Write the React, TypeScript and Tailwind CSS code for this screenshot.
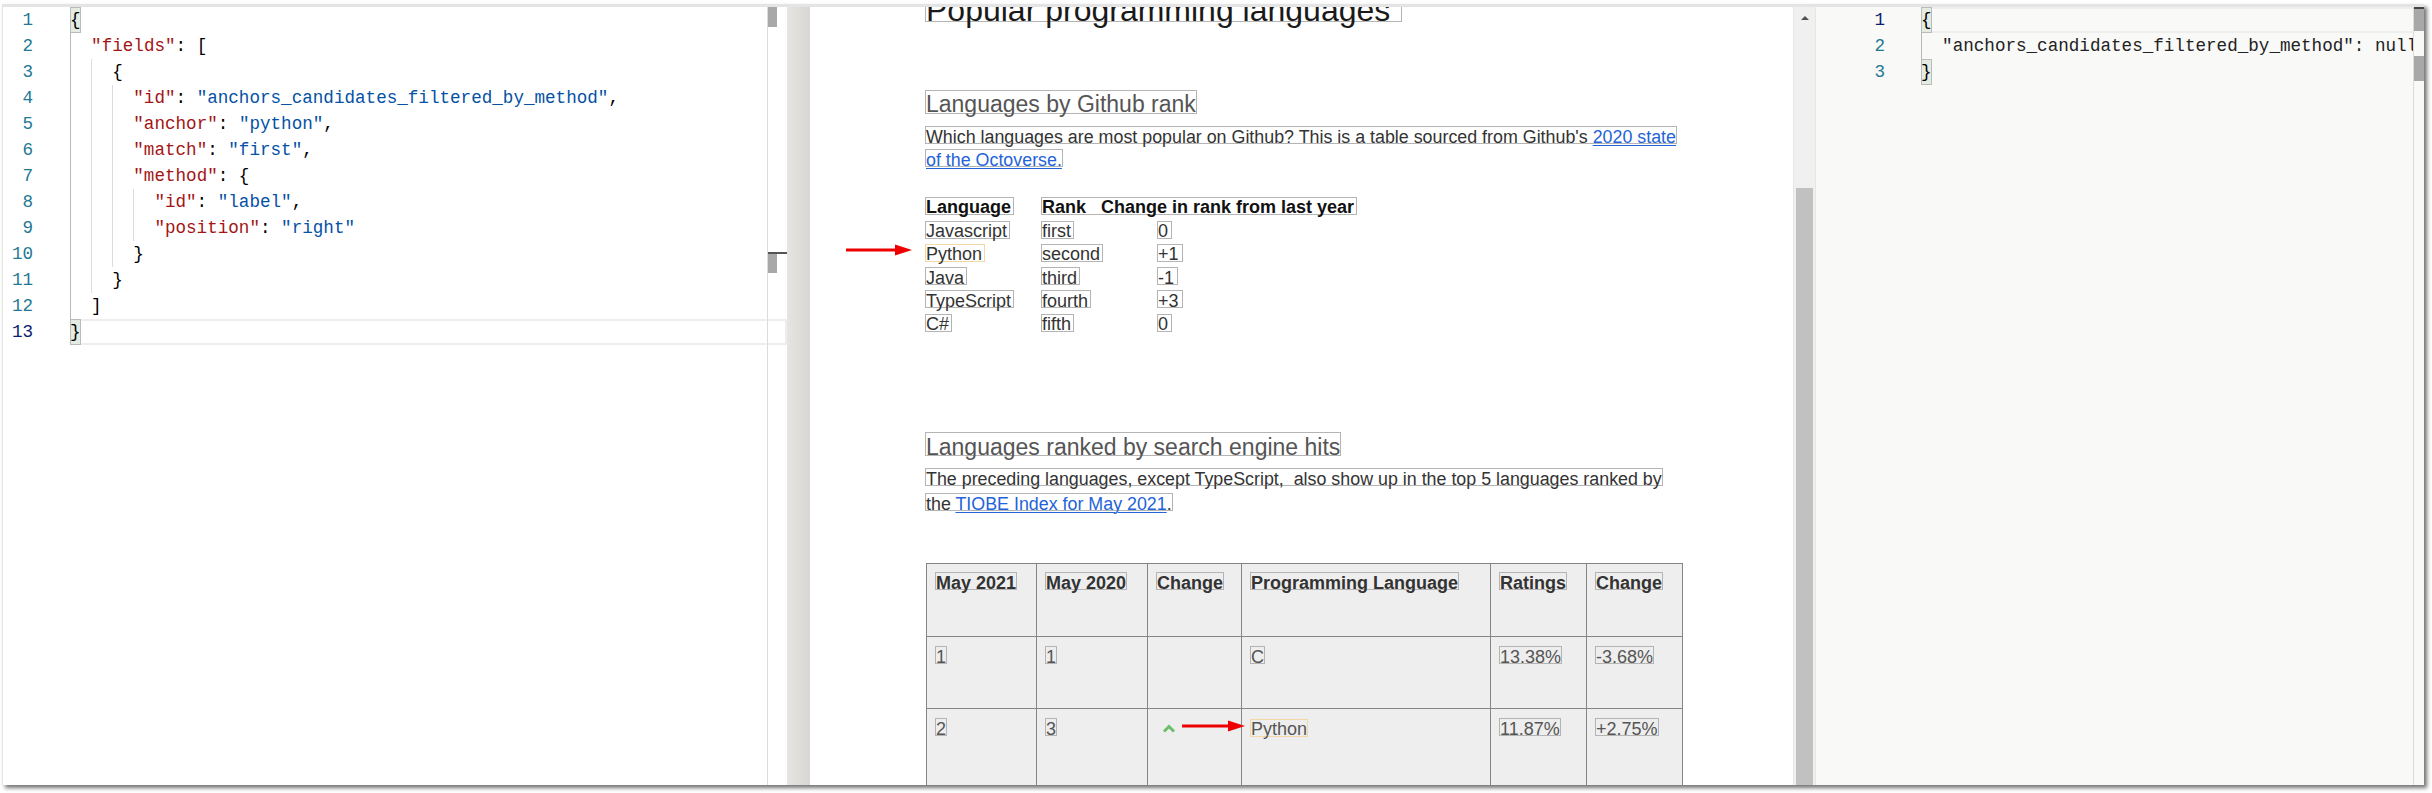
import React from "react";

type Tok = [string, string];

const KEY = "text-[#a31515]";
const STR = "text-[#0451a5]";
const PUN = "text-[#000000]";

type Line = { indent: number; toks: Tok[]; brace?: string };

const leftCode: Line[] = [
  { indent: 0, toks: [], brace: "{" },
  { indent: 1, toks: [['"fields"', KEY], [": [", PUN]] },
  { indent: 2, toks: [["{", PUN]] },
  {
    indent: 3,
    toks: [
      ['"id"', KEY],
      [": ", PUN],
      ['"anchors_candidates_filtered_by_method"', STR],
      [",", PUN],
    ],
  },
  { indent: 3, toks: [['"anchor"', KEY], [": ", PUN], ['"python"', STR], [",", PUN]] },
  { indent: 3, toks: [['"match"', KEY], [": ", PUN], ['"first"', STR], [",", PUN]] },
  { indent: 3, toks: [['"method"', KEY], [": {", PUN]] },
  { indent: 4, toks: [['"id"', KEY], [": ", PUN], ['"label"', STR], [",", PUN]] },
  { indent: 4, toks: [['"position"', KEY], [": ", PUN], ['"right"', STR]] },
  { indent: 3, toks: [["}", PUN]] },
  { indent: 2, toks: [["}", PUN]] },
  { indent: 1, toks: [["]", PUN]] },
  { indent: 0, toks: [], brace: "}" },
];

const rightCode: Line[] = [
  { indent: 0, toks: [], brace: "{" },
  { indent: 1, toks: [['"anchors_candidates_filtered_by_method": null', "text-[#222222]"]] },
  { indent: 0, toks: [], brace: "}" },
];

function Guides({ n }: { n: number }) {
  const out: React.ReactNode[] = [];
  for (let i = 0; i < n; i++) {
    out.push(
      <span
        key={i}
        className={
          i === 0
            ? "inline-block h-[26px] w-[21.1px] shrink-0 border-l border-[#b8b8b8]"
            : "inline-block h-[26px] w-[21.1px] shrink-0 border-l border-[#dcdcdc]"
        }
      />
    );
  }
  return <>{out}</>;
}

function Brace({ ch }: { ch: string }) {
  return (
    <span className="inline-block h-[26px] w-[10.55px] shrink-0 bg-[#e3ebe3] shadow-[inset_0_0_0_1px_#b9bdb9] text-[#000]">
      {ch}
    </span>
  );
}

function CodeLine({
  line,
  num,
  active,
  numW,
  gapW,
}: {
  line: Line;
  num: number;
  active: boolean;
  numW: string;
  gapW: string;
}) {
  return (
    <div className="flex h-[26px] leading-[26px] whitespace-pre">
      <span
        className={
          (active ? "text-[#0b216f] " : "text-[#237893] ") + numW + " shrink-0 text-right"
        }
      >
        {num}
      </span>
      <span className={gapW + " shrink-0"} />
      <div
        className={
          active
            ? "flex flex-1 shadow-[inset_0_0_0_2px_#eeeeee]"
            : "flex flex-1"
        }
      >
        <Guides n={line.indent} />
        {line.brace ? <Brace ch={line.brace} /> : null}
        {line.toks.map((t, i) => (
          <span key={i} className={t[1]}>
            {t[0]}
          </span>
        ))}
      </div>
    </div>
  );
}

function Box({
  children,
  kind,
  className,
}: {
  children: React.ReactNode;
  kind: "p" | "pp" | "h2" | "h1" | "b";
  className?: string;
}) {
  const base =
    kind === "h1"
      ? "inline-block whitespace-pre border border-[#b4b4b4] text-[32px] leading-[22px] pt-[10px] pr-[11px] text-[#1a1a1a]"
      : kind === "h2"
      ? "inline-block whitespace-pre border border-[#b4b4b4] text-[23px] leading-[16px] pt-[5.5px] pb-[0.5px] text-[#555555]"
      : kind === "b"
      ? "inline-block whitespace-pre border border-[#b4b4b4] text-[18px] leading-[12.5px] pt-[3.5px] font-bold text-[#111111]"
      : kind === "pp"
      ? "inline-block whitespace-pre border border-[#b4b4b4] text-[17.85px] leading-[12.5px] pt-[3.5px] text-[#333333]"
      : "inline-block whitespace-pre border border-[#b4b4b4] text-[18px] leading-[12.5px] pt-[3.5px] text-[#333333]";
  return <span className={base + (className ? " " + className : "")}>{children}</span>;
}

function Arrow({ w }: { w: number }) {
  return (
    <svg width={w} height="12" viewBox={`0 0 ${w} 12`} className="block">
      <line x1="0" y1="6" x2={w - 15} y2="6" stroke="#ee0000" strokeWidth="3" />
      <polygon points={`${w - 17},0.5 ${w},6 ${w - 17},11.5`} fill="#ee0000" />
    </svg>
  );
}

const link = "text-[#2463d8] underline decoration-[1px] underline-offset-[2px]";

function Middle() {
  const rows: [string, string, string][] = [
    ["Javascript", "first", "0"],
    ["Python", "second", "+1"],
    ["Java", "third", "-1"],
    ["TypeScript", "fourth", "+3"],
    ["C#", "fifth", "0"],
  ];
  const th = "align-top border-[1.5px] border-[#858585] pt-[8px] pl-[8px]";
  const td = "align-top border-[1.5px] border-[#858585] pt-[9px] pl-[8px]";
  return (
    <div className="flex flex-col items-start pl-[115px] font-['Liberation_Sans',Arial,sans-serif]">
      <div className="-mt-[19px] flex h-[34px]">
        <Box kind="h1">Popular programming languages</Box>
      </div>
      <div className="mt-[67.5px] flex h-[24px]">
        <Box kind="h2">Languages by Github rank</Box>
      </div>
      <div className="mt-[12.5px] flex h-[18px]">
        <Box kind="pp">
          Which languages are most popular on Github? This is a table sourced from Github's{" "}
          <a className={link}>2020 state</a>
        </Box>
      </div>
      <div className="mt-[5px] flex h-[18px]">
        <Box kind="pp">
          <a className={link}>of the Octoverse.</a>
        </Box>
      </div>

      <div className="mt-[29px] flex flex-col">
        <div className="flex h-[18px]">
          <div className="w-[116px] shrink-0">
            <Box kind="b" className="pr-[2px]">Language</Box>
          </div>
          <div>
            <Box kind="b" className="pr-[2px]">{"Rank   Change in rank from last year"}</Box>
          </div>
        </div>
        <div className="mt-[6px] flex flex-col gap-[5.25px]">
          {rows.map((r) => (
            <div key={r[0]} className="flex h-[18px]">
              <div className="w-[116px] shrink-0">
                {r[0] === "Python" ? (
                  <span className="relative inline-block">
                    <span className="absolute right-[calc(100%+13px)] top-[1px]">
                      <Arrow w={66} />
                    </span>
                    <Box kind="p" className="border-[#f3d8a6] pr-[2px]">
                      {r[0]}
                    </Box>
                  </span>
                ) : (
                  <Box kind="p" className="pr-[2px]">{r[0]}</Box>
                )}
              </div>
              <div className="w-[116px] shrink-0">
                <Box kind="p" className="pr-[2px]">{r[1]}</Box>
              </div>
              <div>
                <Box kind="p" className="pr-[3px]">{r[2]}</Box>
              </div>
            </div>
          ))}
        </div>
      </div>

      <div className="mt-[101px] flex h-[24px]">
        <Box kind="h2">Languages ranked by search engine hits</Box>
      </div>
      <div className="mt-[12px] flex h-[18px]">
        <Box kind="pp">
          {"The preceding languages, except TypeScript,  also show up in the top 5 languages ranked by"}
        </Box>
      </div>
      <div className="mt-[7px] flex h-[18px]">
        <Box kind="pp">
          the <a className={link}>TIOBE Index for May 2021</a>.
        </Box>
      </div>

      <table className="ml-[1px] mt-[52px] border-collapse bg-[#eeeeee] table-fixed">
        <colgroup>
          <col className="w-[110px]" />
          <col className="w-[111px]" />
          <col className="w-[94px]" />
          <col className="w-[249px]" />
          <col className="w-[96px]" />
          <col className="w-[96px]" />
        </colgroup>
        <tbody>
          <tr className="h-[73px]">
            {["May 2021", "May 2020", "Change", "Programming Language", "Ratings", "Change"].map(
              (h, i) => (
                <td key={i} className={th}>
                  <div className="flex h-[18px]">
                    <Box kind="b" className="text-[#333333]">{h}</Box>
                  </div>
                </td>
              )
            )}
          </tr>
          <tr className="h-[72px]">
            <td className={td}>
              <div className="flex h-[18px]"><Box kind="p" className="text-[#555555]">1</Box></div>
            </td>
            <td className={td}>
              <div className="flex h-[18px]"><Box kind="p" className="text-[#555555]">1</Box></div>
            </td>
            <td className={td} />
            <td className={td}>
              <div className="flex h-[18px]"><Box kind="p" className="text-[#555555]">C</Box></div>
            </td>
            <td className={td}>
              <div className="flex h-[18px]"><Box kind="p" className="text-[#555555]">13.38%</Box></div>
            </td>
            <td className={td}>
              <div className="flex h-[18px]"><Box kind="p" className="text-[#555555]">-3.68%</Box></div>
            </td>
          </tr>
          <tr className="h-[90px]">
            <td className={td}>
              <div className="flex h-[18px]"><Box kind="p" className="text-[#555555]">2</Box></div>
            </td>
            <td className={td}>
              <div className="flex h-[18px]"><Box kind="p" className="text-[#555555]">3</Box></div>
            </td>
            <td className={td}>
              <div className="flex h-[18px] items-start pl-[6px] pt-[6px]">
                <svg width="14" height="9" viewBox="0 0 14 9">
                  <polyline points="2,7.5 7,2.5 12,7.5" fill="none" stroke="#6cbf6a" strokeWidth="3" />
                </svg>
              </div>
            </td>
            <td className={td}>
              <div className="flex h-[18px]">
                <span className="relative inline-block">
                  <span className="absolute right-[calc(100%+5px)] top-[2px]">
                    <Arrow w={63} />
                  </span>
                  <Box kind="p" className="border-[#f3d8a6] text-[#555555]">Python</Box>
                </span>
              </div>
            </td>
            <td className={td}>
              <div className="flex h-[18px]"><Box kind="p" className="text-[#555555]">11.87%</Box></div>
            </td>
            <td className={td}>
              <div className="flex h-[18px]"><Box kind="p" className="text-[#555555]">+2.75%</Box></div>
            </td>
          </tr>
        </tbody>
      </table>
    </div>
  );
}

export default function App() {
  return (
    <div className="h-[793px] w-[2432px] overflow-hidden bg-white">
      <div className="ml-[2px] mt-[4px] flex h-[781px] w-[2422px] overflow-hidden border-t-[3px] border-l border-[#e4e4e4] shadow-[3px_3px_4px_rgba(0,0,0,0.55)]">
        {/* Left editor */}
        <div className="relative h-full w-[784px] shrink-0 overflow-hidden bg-white font-['Liberation_Mono',monospace] text-[17.6px]">
          {leftCode.map((l, i) => (
            <CodeLine
              key={i}
              line={l}
              num={i + 1}
              active={i === 12}
              numW="w-[30px]"
              gapW="w-[37px]"
            />
          ))}
          {/* overlay scrollbar / ruler */}
          <div className="absolute right-0 top-0 h-full w-[20px] border-l border-[#dcdcdc]">
            <div className="h-[20px] w-[9px] bg-[#a8a8a8]" />
            <div className="mt-[225px] h-[2px] w-[19px] bg-[#555555]" />
            <div className="h-[19px] w-[9px] bg-[#a8a8a8]" />
          </div>
        </div>

        {/* Splitter */}
        <div className="h-full w-[23px] shrink-0 bg-gradient-to-r from-[#e6e5e1] to-[#d7d6d2]" />

        {/* Middle preview */}
        <div className="flex h-full w-[1006px] shrink-0 bg-white">
          <div className="h-full w-[983px] overflow-hidden">
            <Middle />
          </div>
          <div className="flex h-full w-[23px] shrink-0 flex-col items-center border-x border-[#e6e6e6] bg-[#f0f0f0]">
            <div className="mt-[9px] h-0 w-0 border-x-[4px] border-b-[4px] border-x-transparent border-b-[#505050]" />
            <div className="mt-[168px] w-[17px] flex-1 bg-[#c1c1c1]" />
          </div>
        </div>

        {/* Right output editor */}
        <div className="relative h-full flex-1 overflow-hidden bg-[#f9f9f8] font-['Liberation_Mono',monospace] text-[17.6px]">
          {rightCode.map((l, i) => (
            <CodeLine
              key={i}
              line={l}
              num={i + 1}
              active={i === 0}
              numW="w-[69px]"
              gapW="w-[36px]"
            />
          ))}
          <div className="absolute right-0 top-0 h-full w-[11px] border-l border-[#dcdcdc] bg-[#f9f9f8]">
            <div className="h-[2px] w-[10px] bg-[#444444]" />
            <div className="h-[22px] w-[10px] bg-[#a8a8a8]" />
            <div className="mt-[25px] h-[25px] w-[10px] bg-[#a8a8a8]" />
          </div>
        </div>
      </div>
    </div>
  );
}
